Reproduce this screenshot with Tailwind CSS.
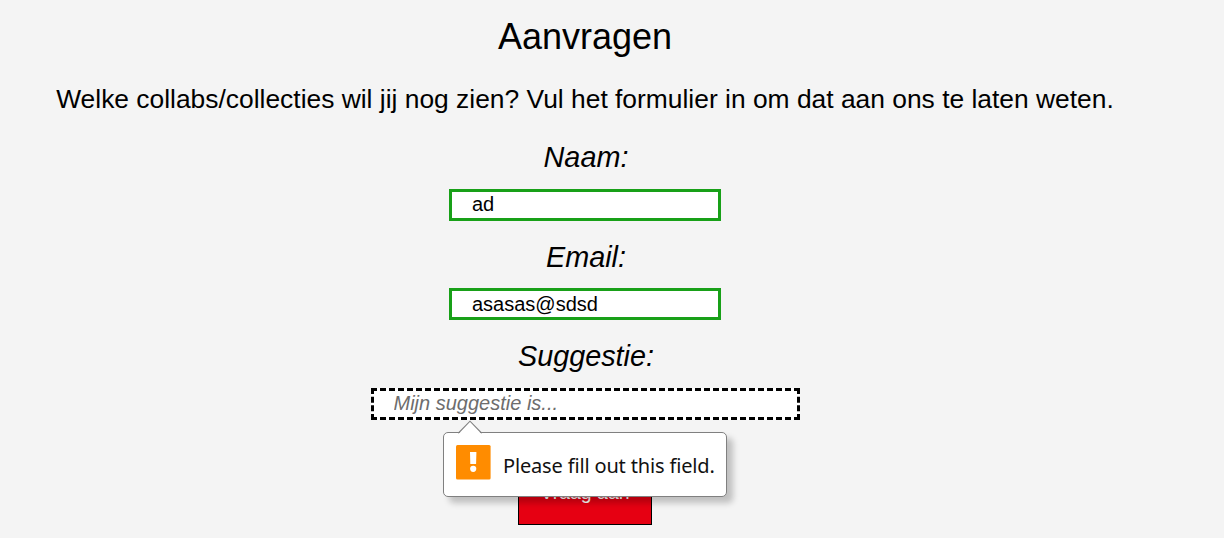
<!DOCTYPE html>
<html lang="nl">
<head>
<meta charset="utf-8">
<title>Aanvragen</title>
<script src="https://cdn.jsdelivr.net/npm/@tailwindcss/browser@4"></script>
</head>
<body class="h-[538px] overflow-hidden bg-[#f4f4f4] text-black font-['Liberation_Sans',Arial,sans-serif]">
<main class="flex w-[1170px] flex-col items-center pt-4">
  <h1 class="text-[36px] leading-[42px]">Aanvragen</h1>
  <p class="mt-[26px] whitespace-nowrap text-[26.4px] leading-[30px]">Welke collabs/collecties wil jij nog zien? Vul het formulier in om dat aan ons te laten weten.</p>
  <form class="relative mt-[26px] flex flex-col items-center">
    <label for="naam" class="pl-[2px] text-[28.8px] leading-[34px] italic">Naam:</label>
    <input id="naam" value="ad" class="mt-[15px] h-8 w-[272px] border-[3px] border-[#18a018] bg-white px-5 pb-[2px] text-[20px] leading-6">
    <label for="email" class="mt-[19px] pl-[2px] text-[28.8px] leading-[34px] italic">Email:</label>
    <input id="email" value="asasas@sdsd" class="mt-[14px] h-8 w-[272px] border-[3px] border-[#18a018] bg-white px-5 text-[20px] leading-6">
    <label for="suggestie" class="mt-[19px] pl-[2px] text-[28.8px] leading-[34px] italic">Suggestie:</label>
    <input id="suggestie" placeholder="Mijn suggestie is..." class="mt-[15px] h-8 w-[429px] border-[3px] border-dashed border-black bg-white px-5 pb-[2px] text-[20px] leading-6 placeholder:text-[#6d6d6d] placeholder:italic">
    <button type="button" class="mt-[46px] h-[59px] w-[134px] border border-black bg-[#e60012] pb-[6px] text-[19.5px] text-white">Vraag aan</button>

    <div role="alert" class="absolute top-[292px] left-1/2 -ml-[142px] flex h-[65px] w-[284px] items-center rounded-[5px] border border-[#808080] bg-white shadow-[6px_6px_6px_rgba(0,0,0,0.22)]">
      <svg class="absolute -top-[13px] left-[13px]" width="26" height="14" viewBox="0 0 26 14"><path d="M1.5 14 L13 1.5 L24.5 14Z" fill="#fff"/><path d="M1 13 L2 12.5 L13 1.2 L24 12.5 L25 13" fill="none" stroke="#808080" stroke-width="1.1"/></svg>
      <svg class="mb-[5px] ml-3 shrink-0" width="35" height="35" viewBox="0 0 35 35"><rect width="34.6" height="34.6" rx="1.5" fill="#ff8c00"/><path d="M14 7h6.4l-.3 12h-5.8z" fill="#fff"/><circle cx="17.2" cy="23.8" r="3.1" fill="#fff"/></svg>
      <span class="ml-3 whitespace-nowrap pt-[2px] font-['Noto_Sans','Open_Sans',sans-serif] text-[20px] tracking-[-0.16px] text-[#111]">Please fill out this field.</span>
    </div>
  </form>
</main>
</body>
</html>
